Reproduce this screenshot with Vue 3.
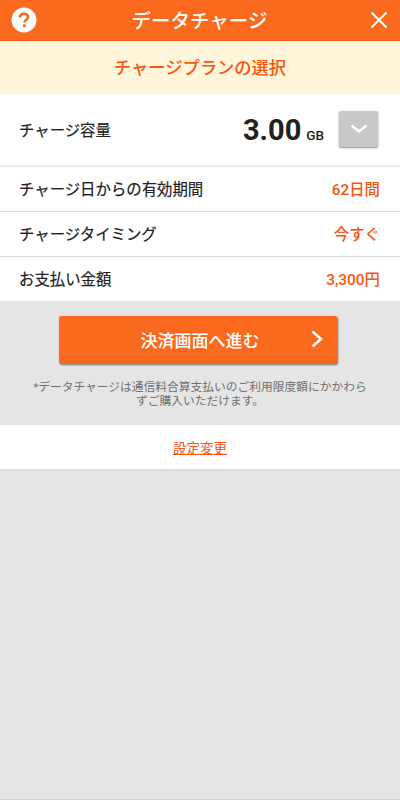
<script setup>
const rows = [
  { label: 'チャージ日からの有効期間', value: '62日間' },
  { label: 'チャージタイミング', value: '今すぐ' },
  { label: 'お支払い金額', value: '3,300円' }
]
</script>

<template>
  <div class="page">
    <header class="header">
      <svg class="help" width="26" height="26" viewBox="0 0 26 26">
        <circle cx="13" cy="13" r="12.5" fill="#fff" />
        <path d="M9 10.5c0-2.400 1.800-3.800 4-3.800s4 1.300 4 3.400c0 2.800-3.600 2.900-3.600 5.300" fill="none" stroke="#f96a1e" stroke-width="2.600" />
        <rect x="12" y="17.400" width="2.800" height="2.800" fill="#f96a1e" />
      </svg>
      <h1 class="title">データチャージ</h1>
      <svg class="close" width="18" height="18" viewBox="0 0 18 18">
        <path d="M1.500 1.500l15 15M16.500 1.500l-15 15" stroke="#fff" stroke-width="2" fill="none" />
      </svg>
    </header>

    <div class="plan-title">チャージプランの選択</div>

    <section class="rows">
      <div class="row capacity">
        <span class="label">チャージ容量</span>
        <div class="capacity-right">
          <span class="amount">3.00</span>
          <span class="unit">GB</span>
          <button class="select-btn">
            <svg width="18" height="10" viewBox="0 0 18 10">
              <path d="M1.500 1.500L9 7.500l7.500-6" fill="none" stroke="#fff" stroke-width="2.400" />
            </svg>
          </button>
        </div>
      </div>
      <div v-for="row in rows" :key="row.label" class="row">
        <span class="label">{{ row.label }}</span>
        <span class="value">{{ row.value }}</span>
      </div>
    </section>

    <section class="action">
      <button class="pay-btn">
        <span>決済画面へ進む</span>
        <svg class="pay-arrow" width="12" height="18" viewBox="0 0 12 18">
          <path d="M1.500 1.500L10 9l-8.500 7.500" fill="none" stroke="#fff" stroke-width="2.600" />
        </svg>
      </button>
      <p class="note">*データチャージは通信料合算支払いのご利用限度額にかかわらずご購入いただけます。</p>
    </section>

    <div class="settings">
      <a class="settings-link">設定変更</a>
    </div>
  </div>
</template>

<style>
html, body {
  margin: 0;
  background: #e5e5e5;
}
</style>

<style scoped>
.page {
  display: flex;
  flex-direction: column;
  height: 800px;
  box-sizing: border-box;
  background: #e5e5e5;
  border-bottom: 1px solid #d0d0d0;
  font-family: Roboto, "Noto Sans CJK JP", sans-serif;
}

.header {
  display: grid;
  grid-template-columns: 26px 1fr 26px;
  align-items: center;
  box-sizing: border-box;
  height: 41px;
  padding: 0 12px 0 11px;
  background: #f96a1e;
  border-bottom: 1px solid #f4570f;
}

.close {
  justify-self: end;
}

.title {
  margin: 0;
  padding-bottom: 2px;
  font-size: 19.500px;
  font-weight: 500;
  color: #fff;
  text-align: center;
}

.plan-title {
  display: flex;
  align-items: center;
  justify-content: center;
  box-sizing: border-box;
  height: 53px;
  padding-bottom: 2px;
  background: #fff5da;
  color: #fa5510;
  font-size: 17.300px;
  font-weight: 500;
}

.rows {
  background: #fff;
}

.row {
  display: flex;
  align-items: center;
  justify-content: space-between;
  box-sizing: border-box;
  height: 45px;
  padding: 0 20px 3px 19px;
  border-bottom: 1px solid #d8d8d8;
}

.row:last-child {
  height: 44px;
  border-bottom: none;
}

.capacity {
  height: 73px;
  padding-right: 22px;
  padding-bottom: 1px;
  border-bottom: 2px solid #e9e9e9;
}

.label {
  font-size: 15.400px;
  font-weight: 400;
  color: #222;
  -webkit-text-stroke: 0.2px #222;
}

.value {
  font-size: 15.400px;
  font-weight: 500;
  color: #fa5510;
}

.capacity-right {
  display: flex;
  align-items: center;
}

.amount {
  margin-top: 2px;
  font-size: 29px;
  font-weight: 700;
  color: #222;
}

.unit {
  margin: 12px 15px 0 5px;
  font-size: 13.500px;
  font-weight: 500;
  color: #222;
}

.select-btn {
  display: flex;
  align-items: center;
  justify-content: center;
  width: 39px;
  height: 36px;
  padding: 0;
  border: none;
  border-radius: 2px;
  background: #c8c8c8;
  box-shadow: 0 1px 2px rgba(0, 0, 0, 0.45);
}

.action {
  display: flex;
  flex-direction: column;
  align-items: center;
  box-sizing: border-box;
  height: 124px;
  padding-top: 15px;
}

.pay-btn {
  position: relative;
  width: 278px;
  height: 48px;
  margin-right: 4px;
  padding: 0 0 2px 4px;
  border: none;
  border-radius: 2px;
  background: #f96a1e;
  box-shadow: 1px 1px 2px rgba(0, 0, 0, 0.5);
  color: #fff;
  font-family: inherit;
  font-size: 17px;
  font-weight: 500;
}

.pay-arrow {
  position: absolute;
  top: 14px;
  right: 14px;
}

.note {
  width: 340px;
  margin: 16px 0 0;
  color: #6f6f6f;
  font-size: 11.750px;
  line-height: 14px;
  text-align: center;
}

.settings {
  display: flex;
  align-items: center;
  justify-content: center;
  box-sizing: border-box;
  height: 46px;
  padding-bottom: 1px;
  background: #fff;
  border-bottom: 2px solid #dcdcdc;
}

.settings-link {
  color: #fa5510;
  font-size: 13.500px;
  text-decoration: underline;
}
</style>
